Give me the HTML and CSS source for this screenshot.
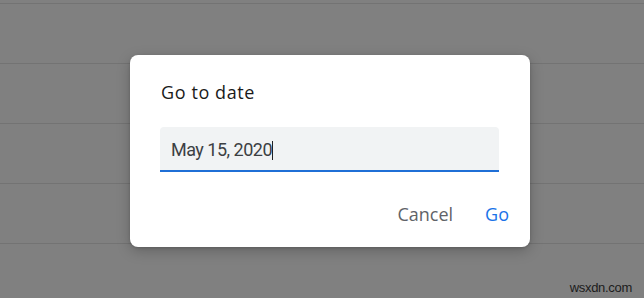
FILE: index.html
```html
<!DOCTYPE html>
<html lang="en">
<head>
<meta charset="utf-8">
<title>Go to date</title>
<link rel="stylesheet" href="styles.css">
</head>
<body>
<div class="backdrop">
  <div class="dialog" role="dialog" aria-labelledby="dlg-title">
    <h2 class="dialog-title" id="dlg-title">Go to date</h2>
    <div class="field">
      <span class="field-value">May 15, 2020</span><span class="caret"></span>
    </div>
    <div class="actions">
      <button class="btn btn-cancel" type="button">Cancel</button>
      <button class="btn btn-go" type="button">Go</button>
    </div>
  </div>
</div>
<div class="watermark">wsxdn.com</div>
</body>
</html>
```

FILE: styles.css
```css
html, body {
  margin: 0;
  padding: 0;
  height: 100%;
}

body {
  background: repeating-linear-gradient(to bottom,
    #808080 0, #808080 3px,
    #737373 3px, #737373 4px,
    #808080 4px, #808080 60px);
  font-family: "Open Sans", "Liberation Sans", sans-serif;
  overflow: hidden;
  position: relative;
}

.backdrop {
  padding: 55px 0 0 130px;
}

.dialog {
  width: 400px;
  height: 192px;
  box-sizing: border-box;
  background: #ffffff;
  border-radius: 8px;
  box-shadow: 0 4px 14px rgba(0, 0, 0, 0.22), 0 1px 3px rgba(0, 0, 0, 0.15);
  padding: 25px 21px 0 30px;
  display: flex;
  flex-direction: column;
}

.dialog-title {
  margin: 0 0 23px 1px;
  font-size: 18px;
  line-height: 24px;
  font-weight: 500;
  letter-spacing: 0.6px;
  color: #1a1a1a;
}

.field {
  margin-right: 10px;
  height: 45px;
  box-sizing: border-box;
  background: #f1f3f4;
  border-radius: 4px 4px 0 0;
  border-bottom: 2px solid #1f6fd6;
  padding: 13px 11px 0;
  display: flex;
  align-items: flex-start;
  font-family: Roboto, "Liberation Sans", sans-serif;
  font-size: 18px;
  line-height: 20px;
  letter-spacing: -0.5px;
  color: #3c4043;
}

.caret {
  width: 1px;
  height: 19px;
  margin-top: 1px;
  background: #202124;
}

.actions {
  margin-top: 30px;
  display: flex;
  justify-content: flex-end;
  gap: 32px;
}

.btn {
  border: 0;
  background: none;
  padding: 0;
  font-family: "Open Sans", "Liberation Sans", sans-serif;
  font-size: 18px;
  line-height: 24px;
  cursor: pointer;
}

.btn-cancel {
  color: #5f6368;
}

.btn-go {
  color: #1a73e8;
}

.watermark {
  position: absolute;
  right: 12px;
  bottom: 3px;
  font-family: "Liberation Sans", Arial, sans-serif;
  font-size: 13px;
  line-height: 14px;
  letter-spacing: -0.3px;
  color: #1c1c1c;
}
```
